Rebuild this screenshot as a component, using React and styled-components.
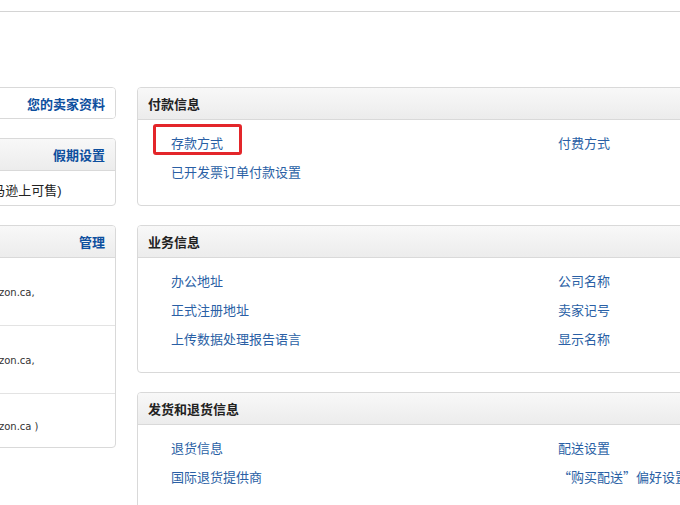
import React from "react";
import styled, { createGlobalStyle } from "styled-components";

const GlobalStyle = createGlobalStyle`
  html, body {
    margin: 0;
    padding: 0;
    background: #fff;
    overflow: hidden;
  }
  body {
    font-family: "Liberation Sans", "Noto Sans CJK SC", sans-serif;
    font-size: 13px;
    color: #111;
  }
`;

const TopBar = styled.div`
  height: 11px;
  border-bottom: 1px solid #d4d4d4;
`;

const Layout = styled.div`
  display: flex;
  align-items: flex-start;
  gap: 21px;
  padding-top: 75px;
`;

const Sidebar = styled.aside`
  flex: none;
  width: 230px;
  margin-left: -114px;
  display: flex;
  flex-direction: column;
  gap: 19px;
`;

const Main = styled.main`
  flex: none;
  width: 620px;
  display: flex;
  flex-direction: column;
  gap: 19px;
`;

const Box = styled.section`
  border: 1px solid #d9d9d9;
  border-radius: 4px;
  background: #fff;
  overflow: hidden;
`;

const BoxHead = styled.header`
  box-sizing: border-box;
  height: ${p => (p.$plain ? "30px" : "32px")};
  display: flex;
  align-items: center;
  justify-content: ${p => (p.$right ? "flex-end" : "flex-start")};
  padding: 0 10px;
  background: ${p =>
    p.$plain ? "#fff" : "linear-gradient(#f8f8f8, #ececec)"};
  border-bottom: ${p => (p.$plain ? "none" : "1px solid #d9d9d9")};
  font-weight: bold;
  color: #222;
`;

const BoldLink = styled.a`
  color: #0d4f9e;
  font-weight: bold;
  text-decoration: none;
`;

const BoxText = styled.div`
  padding: 12px 10px 6px;
  line-height: 16px;
  white-space: nowrap;
  color: #222;
`;

const MarketRow = styled.div`
  padding: ${p => (p.$last ? "17px 10px 12px 14px" : "19px 10px 24px 14px")};
  border-top: ${p => (p.$first ? "none" : "1px solid #e3e3e3")};
  font-family: "DejaVu Sans", "Noto Sans CJK SC", sans-serif;
  font-size: 10px;
  line-height: 8px;
  white-space: nowrap;
  color: #333;
`;

const Faded = styled.span`
  display: block;
  height: 8px;
  overflow: hidden;
  color: transparent;
`;

const SmallLine = styled.span`
  display: block;
  line-height: 16px;
`;

const PanelBody = styled.div`
  display: grid;
  grid-template-columns: 387px 1fr;
  grid-auto-rows: 29px;
  padding: 9px 0 18px 33px;
  align-items: center;
`;

const Cell = styled.div`
  position: relative;
  line-height: 16px;
  white-space: nowrap;
`;

const Link = styled.a`
  color: #2a5fa5;
  text-decoration: none;
`;

const Quote = styled.span`
  font-family: "Noto Sans CJK SC", sans-serif;
`;

const Highlight = styled.span`
  position: absolute;
  left: -18px;
  top: -12px;
  width: 83px;
  height: 25px;
  border: 3px solid #e3262a;
  border-radius: 3px;
  pointer-events: none;
`;

const panels = [
  {
    title: "付款信息",
    rows: [
      ["存款方式", "付费方式"],
      ["已开发票订单付款设置", null]
    ],
    marked: "存款方式"
  },
  {
    title: "业务信息",
    rows: [
      ["办公地址", "公司名称"],
      ["正式注册地址", "卖家记号"],
      ["上传数据处理报告语言", "显示名称"]
    ]
  },
  {
    title: "发货和退货信息",
    rows: [
      ["退货信息", "配送设置"],
      [
        "国际退货提供商",
        <>
          <Quote>“</Quote>购买配送<Quote>”</Quote>偏好设置
        </>
      ]
    ]
  }
];

const markets = [
  "(Amazon.com, Amazon.ca,",
  "(Amazon.com, Amazon.ca,",
  "(Amazon.com, Amazon.ca )"
];

const Panel = ({ title, rows, marked }) => (
  <Box>
    <BoxHead>{title}</BoxHead>
    <PanelBody>
      {rows.flat().map((label, i) => (
        <Cell key={i}>
          {label && <Link href="#">{label}</Link>}
          {label === marked && <Highlight />}
        </Cell>
      ))}
    </PanelBody>
  </Box>
);

export default function App() {
  return (
    <>
      <GlobalStyle />
      <TopBar />
      <Layout>
        <Sidebar>
          <Box>
            <BoxHead $right $plain>
              <BoldLink href="#">您的卖家资料</BoldLink>
            </BoxHead>
          </Box>
          <Box>
            <BoxHead $right>
              <BoldLink href="#">假期设置</BoldLink>
            </BoxHead>
            <BoxText>状态：在售(在亚马逊上可售)</BoxText>
          </Box>
          <Box>
            <BoxHead $right>
              <BoldLink href="#">管理</BoldLink>
            </BoxHead>
            {markets.map((text, i) => (
              <MarketRow key={i} $first={i === 0} $last={i === markets.length - 1}>
                <Faded>北美</Faded>
                <SmallLine>{text}</SmallLine>
              </MarketRow>
            ))}
          </Box>
        </Sidebar>
        <Main>
          {panels.map(p => (
            <Panel key={p.title} {...p} />
          ))}
        </Main>
      </Layout>
    </>
  );
}
